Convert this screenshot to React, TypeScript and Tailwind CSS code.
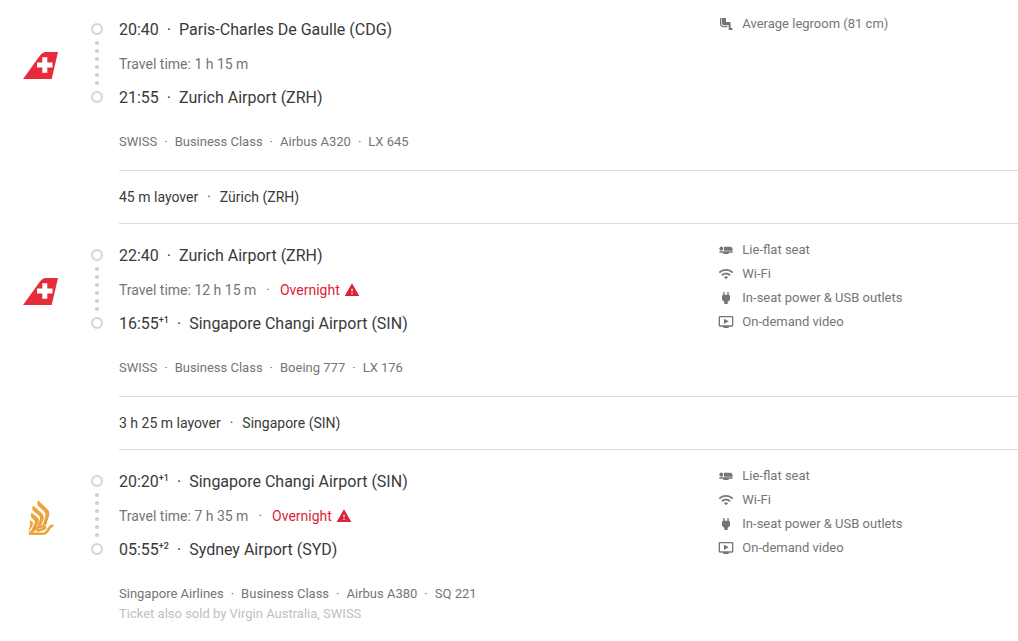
import type { IconType } from 'react-icons';
import {
    MdAirlineSeatFlat,
    MdAirlineSeatLegroomNormal,
    MdOndemandVideo,
    MdPower,
    MdWarning,
    MdWifi,
} from 'react-icons/md';

type Stop = { time: string; days?: string; airport: string };
type Amenity = { icon: IconType; label: string };
type Flight = {
    airline: 'swiss' | 'singapore';
    from: Stop;
    to: Stop;
    duration: string;
    overnight?: boolean;
    details: string[];
    note?: string;
    amenities: Amenity[];
    layover?: { duration: string; city: string };
};

const longHaul: Amenity[] = [
    { icon: MdAirlineSeatFlat, label: 'Lie-flat seat' },
    { icon: MdWifi, label: 'Wi-Fi' },
    { icon: MdPower, label: 'In-seat power & USB outlets' },
    { icon: MdOndemandVideo, label: 'On-demand video' },
];

const flights: Flight[] = [
    {
        airline: 'swiss',
        from: { time: '20:40', airport: 'Paris-Charles De Gaulle (CDG)' },
        to: { time: '21:55', airport: 'Zurich Airport (ZRH)' },
        duration: '1 h 15 m',
        details: ['SWISS', 'Business Class', 'Airbus A320', 'LX 645'],
        amenities: [{ icon: MdAirlineSeatLegroomNormal, label: 'Average legroom (81 cm)' }],
        layover: { duration: '45 m', city: 'Zürich (ZRH)' },
    },
    {
        airline: 'swiss',
        from: { time: '22:40', airport: 'Zurich Airport (ZRH)' },
        to: { time: '16:55', days: '+1', airport: 'Singapore Changi Airport (SIN)' },
        duration: '12 h 15 m',
        overnight: true,
        details: ['SWISS', 'Business Class', 'Boeing 777', 'LX 176'],
        amenities: longHaul,
        layover: { duration: '3 h 25 m', city: 'Singapore (SIN)' },
    },
    {
        airline: 'singapore',
        from: { time: '20:20', days: '+1', airport: 'Singapore Changi Airport (SIN)' },
        to: { time: '05:55', days: '+2', airport: 'Sydney Airport (SYD)' },
        duration: '7 h 35 m',
        overnight: true,
        details: ['Singapore Airlines', 'Business Class', 'Airbus A380', 'SQ 221'],
        note: 'Ticket also sold by Virgin Australia, SWISS',
        amenities: longHaul,
    },
];

function SwissLogo() {
    return (
        <svg viewBox="0 0 36 36" className="h-9 w-9" aria-hidden="true">
            <path d="M1 31 18 7.500Q20.500 4 24 4H36L29.700 31Z" fill="#e62b3c" />
            <path d="M20.300 9.300h5v5.200h5.200v5h-5.200v5.300h-5v-5.300H15v-5h5.300z" fill="#fff" />
        </svg>
    );
}

function SingaporeLogo() {
    return (
        <svg viewBox="0 0 36 36" className="h-9 w-9" fill="#e9a53b" aria-hidden="true">
            {/* feathers, tallest first */}
            <path d="M16 .2 24.800 8.500C27.200 10.800 27.900 13 27 16L24.200 25.200H20.700L23.200 16.500C23.900 13.700 23.200 12.300 21.200 10.500L16.800 6.500C15 4.800 15 3 16 .2Z" />
            <path d="M11 5.500 19.300 12.700C21.700 14.800 22.300 16.800 21.400 19.500L19.300 25.300 15 27.200 17.700 20C18.500 17.600 17.900 16.500 16.200 15L11.700 11.200C9.800 9.500 10 7.800 11 5.500Z" />
            <path d="M9.500 12.700 14.900 16.800C17 18.600 17.400 20.300 16.500 22.600L14.200 28 8 33.200 12.400 23.500C13.200 21.600 12.800 20.700 11.500 19.500L9.800 17.900C8.500 16.600 8.600 15.100 9.500 12.700Z" />
            <path d="M8 20 11.300 22.700 10 26.700 6.200 32.500Q8.500 26.500 8 20Z" />
            {/* body, tail and beak */}
            <path
                d="M7 33.700 14.700 28.400Q17.500 26.300 20.500 26.300C23.600 26.300 24 28 22 28.800L15 31M7 33.700H20.300C27.500 33.700 25 26 31.300 25.500"
                fill="none"
                stroke="#e9a53b"
                strokeWidth="2.600"
            />
        </svg>
    );
}

function Dot() {
    return <span aria-hidden="true">·</span>;
}

function Timeline() {
    return (
        <div className="flex h-20 w-3 flex-col items-center justify-between">
            <span className="h-3 w-3 rounded-full border-2 border-[#d4d4d4]" />
            <div className="flex flex-col gap-1">
                {[0, 1, 2, 3, 4, 5].map((i) => (
                    <span key={i} className="h-1 w-1 rounded-full bg-[#d0d0d0]" />
                ))}
            </div>
            <span className="h-3 w-3 rounded-full border-2 border-[#d4d4d4]" />
        </div>
    );
}

function StopRow({ stop }: { stop: Stop }) {
    return (
        <div className="flex gap-2 text-base leading-6 text-[#3a3a3a]">
            <time className="flex">
                {stop.time}
                {stop.days && <span className="text-[9px] leading-4 font-medium">{stop.days}</span>}
            </time>
            <Dot />
            <span>{stop.airport}</span>
        </div>
    );
}

function FlightLeg({ flight }: { flight: Flight }) {
    return (
        <section className="flex py-[18px] pl-[22px]">
            <div className="pt-[30px]">
                {flight.airline === 'swiss' ? <SwissLogo /> : <SingaporeLogo />}
            </div>
            <div className="ml-[33px] pt-[5px]">
                <Timeline />
            </div>
            <div className="ml-4 grid flex-1 grid-cols-3">
                <div className="col-span-2">
                    <div className="flex flex-col gap-[10px]">
                        <StopRow stop={flight.from} />
                        <div className="flex items-center gap-[10px] text-sm leading-6 text-[#757575]">
                            <span>Travel time: {flight.duration}</span>
                            {flight.overnight && (
                                <>
                                    <Dot />
                                    <span className="flex items-center gap-1 text-[#dc2336]">
                                        Overnight
                                        <MdWarning className="h-4 w-4" />
                                    </span>
                                </>
                            )}
                        </div>
                        <StopRow stop={flight.to} />
                    </div>
                    <div className="mt-[22px] flex gap-[7px] text-[13px] leading-5 text-[#757575]">
                        {flight.details.map((detail, i) => (
                            <span key={detail} className="flex gap-[7px]">
                                {i > 0 && <Dot />}
                                {detail}
                            </span>
                        ))}
                    </div>
                    {flight.note && <p className="text-[13px] leading-5 text-[#c0c0c0]">{flight.note}</p>}
                </div>
                <ul className="-mt-1.5 text-[13px] leading-6 text-[#757575]">
                    {flight.amenities.map(({ icon: Icon, label }) => (
                        <li key={label} className="flex items-center gap-2">
                            <Icon className="h-4 w-4" />
                            {label}
                        </li>
                    ))}
                </ul>
            </div>
        </section>
    );
}

export default function App() {
    return (
        <main className="min-h-screen bg-white font-[Roboto,sans-serif]">
            {flights.map((flight) => (
                <div key={flight.details.join()}>
                    <FlightLeg flight={flight} />
                    {flight.layover && (
                        <div className="mb-0.5 ml-[119px] flex gap-[9px] border-y border-[#dadada] py-4 text-sm leading-5 text-[#3a3a3a]">
                            <span>{flight.layover.duration} layover</span>
                            <Dot />
                            <span>{flight.layover.city}</span>
                        </div>
                    )}
                </div>
            ))}
        </main>
    );
}
